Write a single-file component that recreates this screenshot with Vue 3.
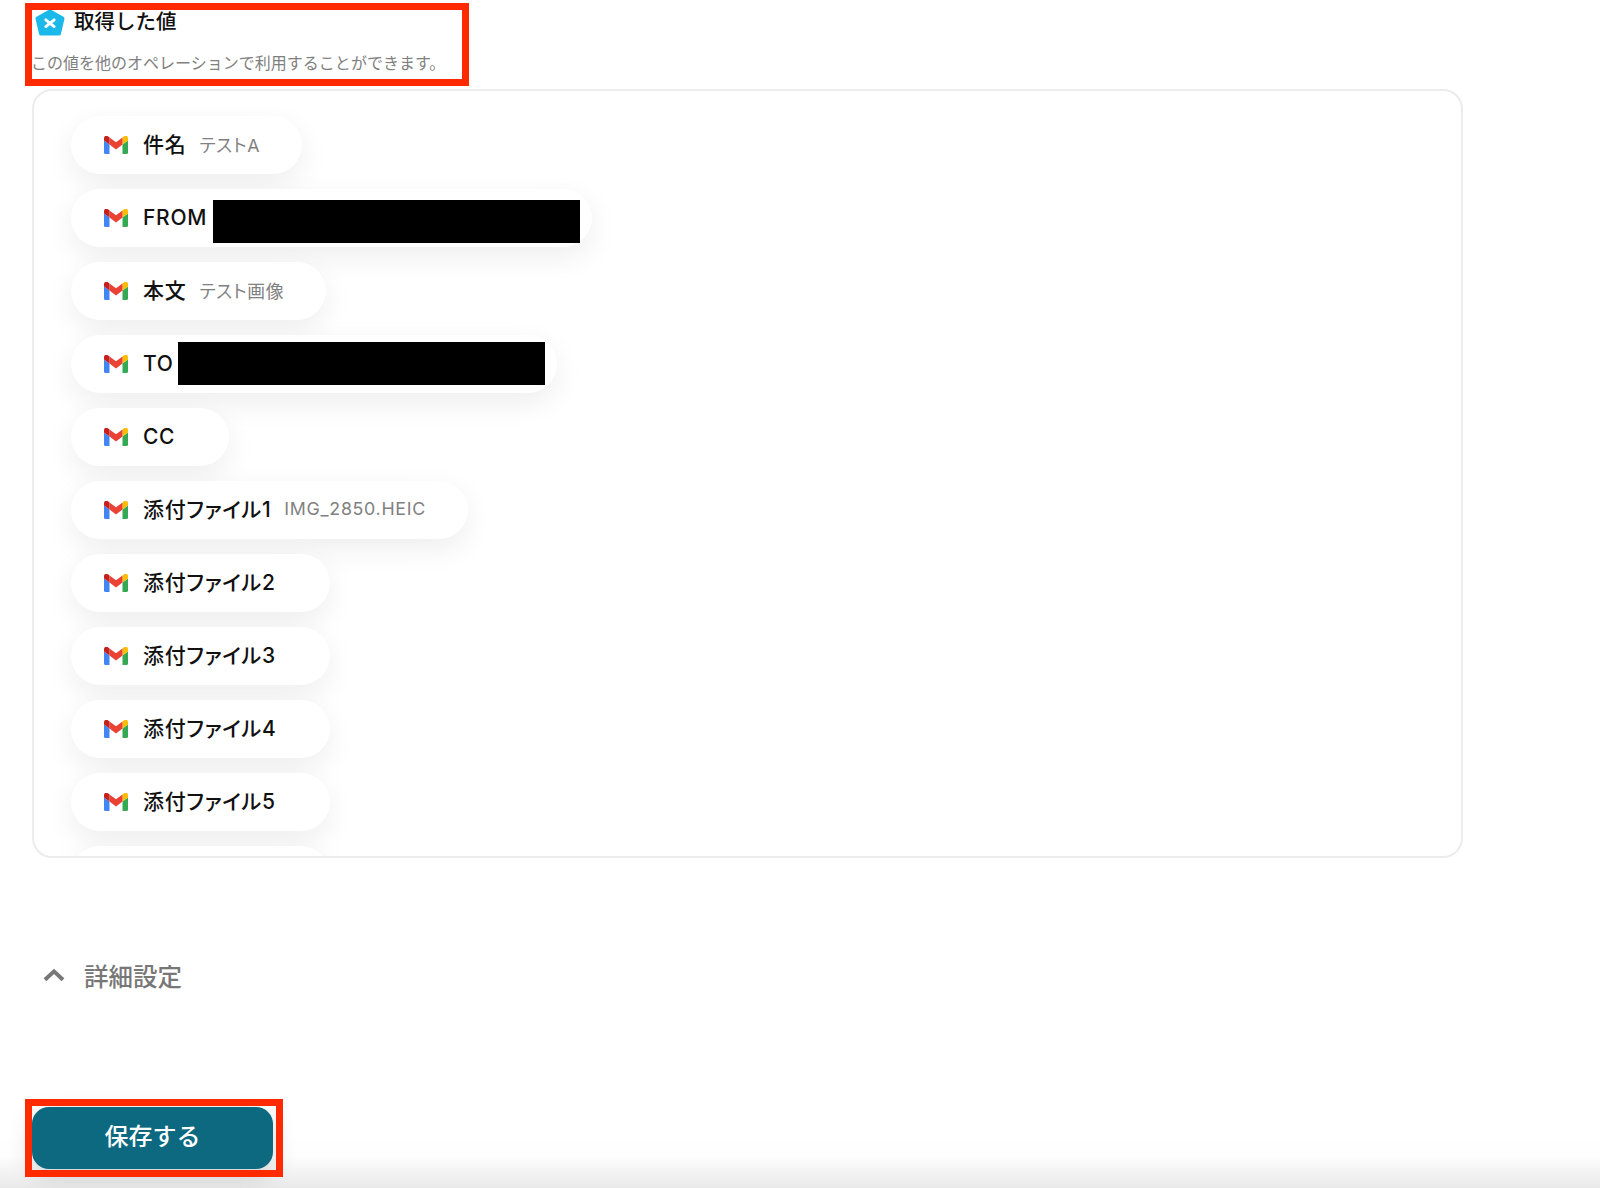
<script setup>
const fields = [
  { label: '件名', value: 'テストA' },
  { label: 'FROM', latin: true, redacted: true, shift: 3, gap: 6 },
  { label: '本文', value: 'テスト画像' },
  { label: 'TO', latin: true, redacted: true, shift: -1, gap: 4 },
  { label: 'CC', latin: true },
  { label: '添付ファイル1', value: 'IMG_2850.HEIC' },
  { label: '添付ファイル2' },
  { label: '添付ファイル3' },
  { label: '添付ファイル4' },
  { label: '添付ファイル5' },
]
</script>

<template>
  <div class="page">
    <header class="head">
      <div class="title-row">
        <svg class="badge" viewBox="0 0 30 27" width="30" height="27">
          <path d="M15 2.5 L27.5 9.5 L24 24.5 H6 L2.5 9.5 Z" fill="#1bb9ea" stroke="#1bb9ea" stroke-width="4" stroke-linejoin="round" />
          <path d="M10.8 10.8 L19.2 17.6 M19.2 10.8 L10.8 17.6" stroke="#fff" stroke-width="2.8" stroke-linecap="round" />
        </svg>
        <h2 class="title">取得した値</h2>
      </div>
      <p class="sub">この値を他のオペレーションで利用することができます。</p>
      <span class="mark mark-head"></span>
    </header>

    <section class="card">
      <div class="pills">
        <div
          v-for="f in fields"
          :key="f.label"
          class="pill"
          :class="{ plain: !f.value && !f.redacted, hidden: f.redacted }"
        >
          <svg class="gmail" viewBox="0 0 24 18" width="24" height="18">
            <path d="M1.6 18H5.5V8.5L0 4.4V16.4A1.6 1.6 0 0 0 1.6 18Z" fill="#4285f4" />
            <path d="M18.5 18H22.4A1.6 1.6 0 0 0 24 16.4V4.4L18.5 8.5Z" fill="#34a853" />
            <path d="M18.5 1.4V8.5L24 4.4V2.2C24 .2 21.7-1 20.1.2Z" fill="#fbbc04" />
            <path d="M5.5 8.5V1.4L12 6.3 18.5 1.4V8.5L12 13.4Z" fill="#ea4335" />
            <path d="M0 2.2V4.4L5.5 8.5V1.4L3.9.2C2.3-1 0 .2 0 2.2Z" fill="#c5221f" />
          </svg>
          <span class="label" :class="{ latin: f.latin }">{{ f.label }}</span>
          <span v-if="f.value" class="value">{{ f.value }}</span>
          <span
            v-if="f.redacted"
            class="redact"
            :style="{ marginLeft: `${f.gap}px`, transform: `translateY(${f.shift}px)` }"
          ></span>
        </div>
        <div class="pill ghost"></div>
      </div>
    </section>

    <div class="advanced">
      <svg class="chev" viewBox="0 0 22 14" width="22" height="14">
        <path d="M2 11.8 L11 3.4 L20 11.8" fill="none" stroke="#777" stroke-width="4" />
      </svg>
      <span>詳細設定</span>
    </div>

    <footer class="foot">
      <button class="save" type="button">保存する</button>
      <span class="mark mark-foot"></span>
    </footer>
  </div>
</template>

<style>
html, body { margin: 0; background: #fff; }
</style>

<style scoped>
.page {
  position: relative;
  box-sizing: border-box;
  width: 1600px;
  height: 1188px;
  overflow: hidden;
  padding-left: 32px;
  font-family: Inter, "Noto Sans CJK JP", sans-serif;
  color: #111;
  background: linear-gradient(to bottom, #ffffff 0, #fdfdfd 40%, #e9e9e9 100%) left bottom / 100% 52px no-repeat #fff;
}
.head {
  position: relative;
  height: 89px;
  display: flex;
  flex-direction: column;
}
.title-row {
  display: flex;
  align-items: center;
  height: 27px;
  margin-top: 9px;
  margin-left: 3px;
  gap: 9px;
}
.badge { flex: none; }
.title {
  margin: -3px 0 0;
  font-size: 20.5px;
  line-height: 27px;
  font-weight: 500;
}
.sub {
  margin: 15px 0 0 -1px;
  font-size: 16px;
  line-height: 24px;
  letter-spacing: 0.01px;
  color: #808080;
  white-space: nowrap;
}
.mark {
  position: absolute;
  box-sizing: border-box;
  border: 7px solid #ff2a00;
  pointer-events: none;
}
.mark-head { left: -7px; top: 3px; width: 444px; height: 83px; }
.card {
  box-sizing: border-box;
  width: 1431px;
  height: 769px;
  border: 2px solid #ececec;
  border-radius: 20px;
  overflow: hidden;
}
.pills {
  display: flex;
  flex-direction: column;
  align-items: flex-start;
  gap: 15px;
  padding: 25px 0 0 37px;
}
.pill {
  flex: none;
  display: flex;
  align-items: center;
  box-sizing: border-box;
  height: 58px;
  padding: 0 42px 0 33px;
  border-radius: 29px;
  background: #fff;
  box-shadow: 0 10px 30px rgba(0, 0, 0, 0.07);
}
.pill.plain { padding-right: 54px; }
.pill.hidden { padding-right: 12px; }
.pill.ghost { width: 259px; }
.gmail { flex: none; margin-right: 15px; }
.label {
  margin-top: -5px;
  font-size: 21px;
  font-weight: 500;
  letter-spacing: 0.7px;
  font-feature-settings: "palt";
  white-space: nowrap;
}
.label.latin { margin-top: -1px; }
.value {
  margin-top: -3px;
  margin-left: 13px;
  font-size: 17.8px;
  letter-spacing: 0.7px;
  font-feature-settings: "palt";
  color: #808080;
  white-space: nowrap;
}
.redact {
  flex: none;
  width: 367px;
  height: 43px;
  background: #000;
}
.advanced {
  display: flex;
  align-items: center;
  height: 40px;
  margin-top: 97px;
  margin-left: 11px;
  gap: 19px;
  font-size: 24.5px;
  font-weight: 500;
  color: #777;
}
.foot {
  position: relative;
  margin-top: 112px;
}
.save {
  display: block;
  width: 241px;
  height: 62px;
  padding: 0 0 7px;
  border: 0;
  border-radius: 17px;
  background: #0c6980;
  color: #fff;
  font-family: inherit;
  font-size: 24px;
  font-weight: 500;
  box-shadow: 0 6px 24px rgba(0, 0, 0, 0.16);
}
.mark-foot { left: -7px; top: -8px; width: 258px; height: 78px; }
</style>
